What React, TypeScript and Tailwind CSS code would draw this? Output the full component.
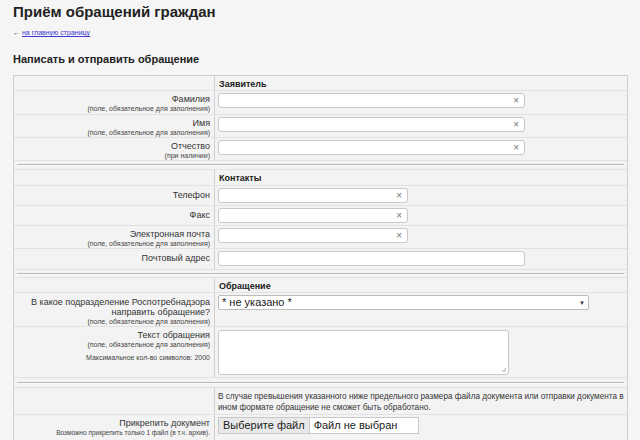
import React from "react";

const F = { fontFamily: '"Liberation Sans", Arial, sans-serif' };

function Clear() {
  return <span className="absolute right-[5px] top-[1px] text-[10px] leading-[12px] text-[#777]">×</span>;
}

function TextInput({ w }: { w: string }) {
  return (
    <div className={`relative h-[15px] ${w} rounded-[3px] border border-[#c8c8c8] bg-white`}>
      <Clear />
    </div>
  );
}

function Label({ title, note, note2 }: { title: string; note?: string; note2?: string }) {
  return (
    <div className="text-right pr-[4px]">
      <div className="text-[9px] leading-[10px] text-[#333]">{title}</div>
      {note && <div className="text-[7px] leading-[9px] text-[#444]">{note}</div>}
      {note2 && <div className="mt-[4px] text-[7px] leading-[9px] text-[#444]">{note2}</div>}
    </div>
  );
}

function Row({ h, label, children, top = "pt-[3px]" }: { h: string; label: React.ReactNode; children: React.ReactNode; top?: string }) {
  return (
    <div className={`flex ${h} border-b border-[#e2e2e2]`}>
      <div className={`w-[201px] shrink-0 border-r border-[#d0d0d0] ${top}`}>{label}</div>
      <div className="flex-1 pl-[3px] pt-[2px]">{children}</div>
    </div>
  );
}

function Header({ title, h = "h-[15px]" }: { title: string; h?: string }) {
  return (
    <div className={`flex ${h} border-b border-[#e2e2e2]`}>
      <div className="w-[201px] shrink-0 border-r border-[#d0d0d0]" />
      <div className="flex-1 pl-[4px] pt-[3px] text-[9px] leading-[10px] font-bold text-[#222]">{title}</div>
    </div>
  );
}

function Sep({ h = "h-[9px]" }: { h?: string }) {
  return (
    <div className={`${h} flex items-center px-[3px] border-b border-[#e2e2e2]`}>
      <div className="w-full border-t border-[#b8b8b8] border-b border-b-[#fafafa]" />
    </div>
  );
}

export default function App() {
  const req = "(поле, обязательное для заполнения)";
  return (
    <div className="w-[640px] h-[440px] overflow-hidden bg-[#f5f5f5]" style={F}>
      <div className="pl-[13px] pt-[3px]">
        <h1 className="text-[15px] leading-[18px] font-bold text-[#222]">Приём обращений граждан</h1>
        <div className="mt-[7px] text-[7px] leading-[9px] text-[#333]">
          ← <span className="text-[#3a3ad0] underline">на главную страницу</span>
        </div>
        <h2 className="mt-[16px] text-[11px] leading-[13px] font-bold text-[#222]">Написать и отправить обращение</h2>
      </div>
      <div className="ml-[13px] mt-[9px] w-[615px] border border-[#cfcfcf] bg-[#f3f3f3]">
        <Header title="Заявитель" h="h-[15px]" />
        <Row h="h-[24px]" label={<Label title="Фамилия" note={req} />}>
          <TextInput w="w-[307px]" />
        </Row>
        <Row h="h-[23px]" label={<Label title="Имя" note={req} />}>
          <TextInput w="w-[307px]" />
        </Row>
        <Row h="h-[23px]" label={<Label title="Отчество" note="(при наличии)" />}>
          <TextInput w="w-[307px]" />
        </Row>
        <Sep h="h-[9px]" />
        <Header title="Контакты" h="h-[16px]" />
        <Row h="h-[20px]" top="pt-[4px]" label={<Label title="Телефон" />}>
          <TextInput w="w-[190px]" />
        </Row>
        <Row h="h-[20px]" top="pt-[4px]" label={<Label title="Факс" />}>
          <TextInput w="w-[190px]" />
        </Row>
        <Row h="h-[23px]" label={<Label title="Электронная почта" note={req} />}>
          <TextInput w="w-[190px]" />
        </Row>
        <Row h="h-[21px]" top="pt-[4px]" label={<Label title="Почтовый адрес" />}>
          <div className="h-[15px] w-[307px] rounded-[3px] border border-[#c8c8c8] bg-white" />
        </Row>
        <Sep h="h-[8px]" />
        <Header title="Обращение" h="h-[15px]" />
        <Row
          h="h-[34px]"
          top="pt-[4px]"
          label={
            <div className="text-right pr-[4px]">
              <div className="text-[9px] leading-[10px] text-[#333]">В какое подразделение Роспотребнадзора</div>
              <div className="text-[9px] leading-[10px] text-[#333]">направить обращение?</div>
              <div className="text-[7px] leading-[9px] text-[#444]">{req}</div>
            </div>
          }
        >
          <div className="relative h-[15px] w-[371px] rounded-[2px] border border-[#bdbdbd] bg-white pl-[3px] text-[11px] leading-[13px] text-[#222]">
            * не указано *
            <span className="absolute right-[3px] top-[1px] text-[6px] leading-[12px] text-[#333]">▼</span>
          </div>
        </Row>
        <Row
          h="h-[51px]"
          top="pt-[3px]"
          label={<Label title="Текст обращения" note={req} note2="Максимальное кол-во символов: 2000" />}
        >
          <div className="relative mt-[1px] h-[45px] w-[291px] rounded-[3px] border border-[#c8c8c8] bg-white">
            <svg className="absolute right-[1px] bottom-[1px]" width="6" height="6" viewBox="0 0 6 6">
              <path d="M5 1L1 5M5 3L3 5" stroke="#999" strokeWidth="0.8" />
            </svg>
          </div>
        </Row>
        <Sep h="h-[10px]" />
        <div className="flex h-[27px] border-b border-[#e2e2e2]">
          <div className="w-[201px] shrink-0 border-r border-[#d0d0d0]" />
          <div className="flex-1 pl-[3px] pt-[3px] text-[8.2px] leading-[11px] text-[#333] whitespace-nowrap">
            В случае превышения указанного ниже предельного размера файла документа или отправки документа в
            <br />
            ином формате обращение не сможет быть обработано.
          </div>
        </div>
        <Row
          h="h-[30px]"
          top="pt-[3px]"
          label={
            <div className="text-right pr-[4px]">
              <div className="text-[9px] leading-[10px] text-[#333]">Прикрепить документ</div>
              <div className="text-[6.5px] leading-[9px] text-[#444]">Возможно прикрепить только 1 файл (в т.ч. архив).</div>
            </div>
          }
        >
          <div className="flex h-[17px] w-[201px] items-center border border-[#c8c8c8] bg-white text-[11px] text-[#222]">
            <div className="h-full flex items-center border-r border-[#c8c8c8] bg-[#e9e9e9] px-[4px]">Выберите файл</div>
            <div className="pl-[4px]">Файл не выбран</div>
          </div>
        </Row>
      </div>
    </div>
  );
}
